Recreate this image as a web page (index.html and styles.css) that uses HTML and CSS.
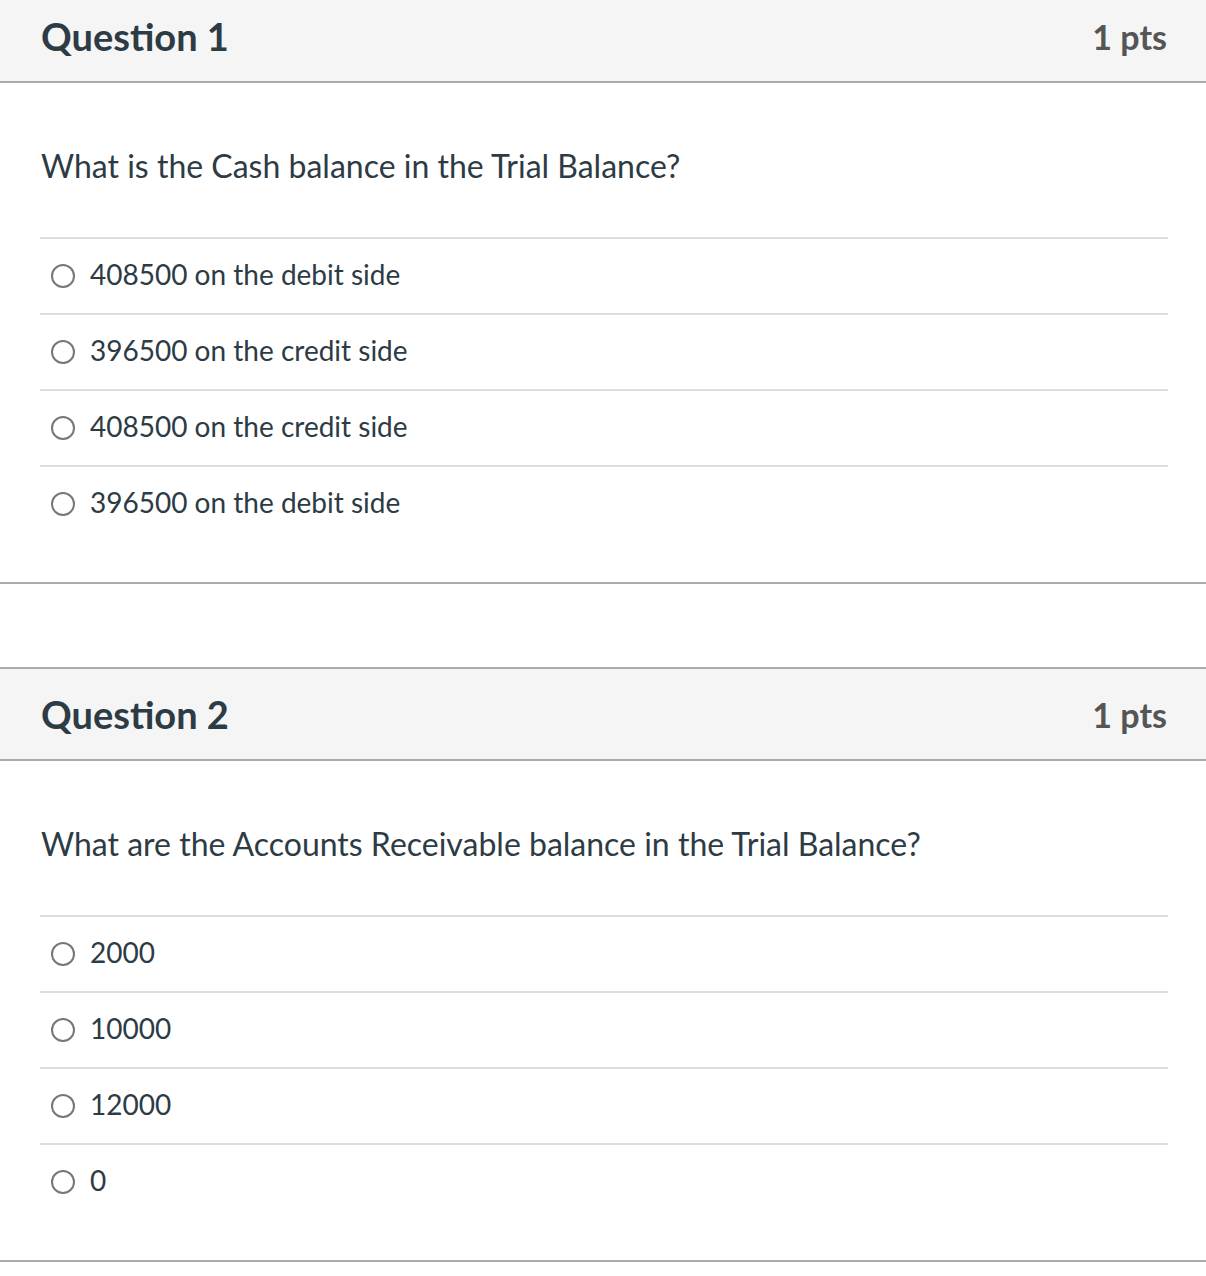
FILE: index.html
```html
<!DOCTYPE html>
<html>
<head>
<meta charset="utf-8">
<link rel="stylesheet" href="styles.css">
</head>
<body>
<div class="page">
  <div class="question">
    <div class="q-header">
      <h2 class="q-title">Question 1</h2>
      <span class="q-points">1 pts</span>
    </div>
    <div class="q-body">
      <p class="q-text">What is the Cash balance in the Trial Balance?</p>
      <div class="answers">
        <label class="answer"><span class="radio"></span><span class="answer-text">408500 on the debit side</span></label>
        <label class="answer"><span class="radio"></span><span class="answer-text">396500 on the credit side</span></label>
        <label class="answer"><span class="radio"></span><span class="answer-text">408500 on the credit side</span></label>
        <label class="answer"><span class="radio"></span><span class="answer-text">396500 on the debit side</span></label>
      </div>
    </div>
  </div>
  <div class="question">
    <div class="q-header">
      <h2 class="q-title">Question 2</h2>
      <span class="q-points">1 pts</span>
    </div>
    <div class="q-body">
      <p class="q-text">What are the Accounts Receivable balance in the Trial Balance?</p>
      <div class="answers">
        <label class="answer"><span class="radio"></span><span class="answer-text">2000</span></label>
        <label class="answer"><span class="radio"></span><span class="answer-text">10000</span></label>
        <label class="answer"><span class="radio"></span><span class="answer-text">12000</span></label>
        <label class="answer"><span class="radio"></span><span class="answer-text">0</span></label>
      </div>
    </div>
  </div>
</div>
</body>
</html>
```

FILE: styles.css
```css
html, body {
  margin: 0;
  padding: 0;
  background: #ffffff;
}
body {
  font-family: Lato, "Open Sans", "Liberation Sans", sans-serif;
  color: #2d3b45;
}
.page {
  margin-top: -11px;
  display: flex;
  flex-direction: column;
  gap: 83px;
}
.question {
  border-top: 2px solid #aaaaaa;
  border-bottom: 2px solid #aaaaaa;
}
.q-header {
  background: #f5f5f5;
  border-bottom: 2px solid #aaaaaa;
  height: 92px;
  box-sizing: border-box;
  display: flex;
  align-items: center;
  justify-content: space-between;
  padding: 0 39px 0 41px;
}
.q-title {
  margin: 0;
  font-size: 38px;
  font-weight: 700;
  color: #2d3b45;
}
.q-points {
  font-size: 34px;
  font-weight: 700;
  color: #555555;
}
.q-body {
  padding: 0 38px 41px 40px;
}
.q-text {
  margin: 0;
  padding: 63px 0 51px 1px;
  font-size: 32px;
  line-height: 40px;
}
.answers {
  display: flex;
  flex-direction: column;
}
.answer {
  display: flex;
  align-items: center;
  gap: 15px;
  height: 76px;
  box-sizing: border-box;
  border-top: 2px solid #dddddd;
  padding-left: 11px;
  padding-bottom: 4px;
}
.radio {
  width: 20px;
  height: 20px;
  border: 2px solid #777777;
  border-radius: 50%;
  flex: none;
  margin-top: 4px;
}
.answer-text {
  font-size: 28px;
}
```
